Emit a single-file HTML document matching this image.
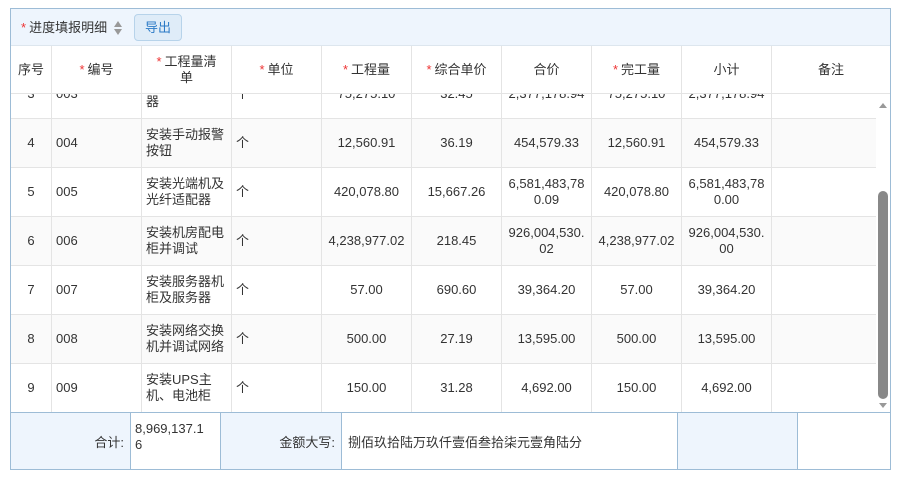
<!DOCTYPE html>
<html><head><meta charset="utf-8"><style>
*{box-sizing:border-box;margin:0;padding:0}
body{width:900px;height:482px;background:#fff;font-family:"Liberation Sans","Noto Sans CJK SC",sans-serif;font-size:13px;color:#333;position:relative;overflow:hidden}
.box{position:absolute;left:10px;top:8px;width:881px;height:462px;border:1px solid #9dbcd6}
.tb{position:absolute;left:0;top:0;width:879px;height:37px;background:#eef5fd;border-bottom:1px solid #dde6ee}
.r{color:#e33;font-size:13px;margin-right:3px}
.btn{position:absolute;left:123px;top:5px;width:48px;height:27px;border:1px solid #b7d3ea;border-radius:4px;background:#dfecf8;color:#2b7ac6;text-align:center;line-height:25px}
.c{position:absolute;display:flex;align-items:center;justify-content:center;text-align:center;border-right:1px solid #e4e4e4;border-bottom:1px solid #e4e4e4;line-height:16px}
.l{justify-content:flex-start;text-align:left;padding-left:4px}
.body{position:absolute;left:0;top:85px;width:865px;height:319px;overflow:hidden}
.f{position:absolute;top:404px;height:56px;border-right:1px solid #9dbcd6;display:flex;align-items:center}
</style></head><body>
<div class="box">
<div class="tb"><div style="position:absolute;left:10px;top:10px;line-height:18px"><span class="r">*</span>进度填报明细</div>
<svg style="position:absolute;left:102px;top:10px" width="10" height="18"><path d="M1 8 L5 2 L9 8Z M1 10 L5 16 L9 10Z" fill="#999"/></svg>
<div class="btn">导出</div></div>
<div id="hd"></div>
<div class="body" id="bd"></div>
<div style="position:absolute;left:866px;top:85px;width:13px;height:319px;background:#fff">
<svg style="position:absolute;left:1px;top:6px" width="10" height="10"><path d="M1 8 L5 3 L9 8Z" fill="#999"/></svg>
<div style="position:absolute;left:1px;top:97px;width:10px;height:208px;background:#888;border-radius:5px"></div>
<svg style="position:absolute;left:1px;top:307px" width="10" height="10"><path d="M1 2 L5 7 L9 2Z" fill="#999"/></svg></div>
<div style="position:absolute;left:0;top:403px;width:879px;height:57px;border-top:1px solid #9dbcd6"></div>
<div class="f" style="left:0;width:120px;background:#eef5fd;justify-content:flex-end;padding-right:6px">合计:</div>
<div class="f" style="left:120px;width:90px;align-items:flex-start;padding:8px 4px;line-height:16px">8,969,137.1<br>6</div>
<div class="f" style="left:210px;width:121px;background:#eef5fd;justify-content:flex-end;padding-right:6px">金额大写:</div>
<div class="f" style="left:331px;width:336px;padding-left:6px">捌佰玖拾陆万玖仟壹佰叁拾柒元壹角陆分</div>
<div class="f" style="left:667px;width:120px;background:#eef5fd"></div>
</div>
<script>
var X=[0,41,131,221,311,401,491,581,671,761,879];
var H=[['序号'],['编号',1],['工程量清<br>单',1],['单位',1],['工程量',1],['综合单价',1],['合价'],['完工量',1],['小计'],['备注']];
var h='';
H.forEach(function(a,i){h+='<div class="c" style="left:'+X[i]+'px;top:37px;width:'+(X[i+1]-X[i])+'px;height:48px;'+(i==9?'border-right:none':'')+'"><div>'+(a[1]?'<span class="r">*</span>':'')+a[0]+'</div></div>'});
document.getElementById('hd').innerHTML=h;
var R=[['3','003','安装...报<br>器','个','75,275.10','32.45','2,377,178.94','75,275.10','2,377,178.94'],
['4','004','安装手动报警<br>按钮','个','12,560.91','36.19','454,579.33','12,560.91','454,579.33'],
['5','005','安装光端机及<br>光纤适配器','个','420,078.80','15,667.26','6,581,483,78<br>0.09','420,078.80','6,581,483,78<br>0.00'],
['6','006','安装机房配电<br>柜并调试','个','4,238,977.02','218.45','926,004,530.<br>02','4,238,977.02','926,004,530.<br>00'],
['7','007','安装服务器机<br>柜及服务器','个','57.00','690.60','39,364.20','57.00','39,364.20'],
['8','008','安装网络交换<br>机并调试网络','个','500.00','27.19','13,595.00','500.00','13,595.00'],
['9','009','安装UPS主<br>机、电池柜','个','150.00','31.28','4,692.00','150.00','4,692.00']];
var b='';
R.forEach(function(r,j){var t=-24+j*49;var bg=(j%2)?'#fafafa':'#fff';
b+='<div style="position:absolute;left:0;top:'+t+'px;width:865px;height:49px;background:'+bg+'"></div>';
for(var i=0;i<10;i++){var w=X[i+1]-X[i];if(i==9)w=865-X[9];
var L=(i==1||i==2||i==3);
b+='<div class="c'+(L?' l':'')+'" style="left:'+X[i]+'px;top:'+t+'px;width:'+w+'px;height:49px;'+(i==9?'border-right:none':'')+'">'+(r[i]||'')+'</div>';}});
document.getElementById('bd').innerHTML=b;
</script>
</body></html>
